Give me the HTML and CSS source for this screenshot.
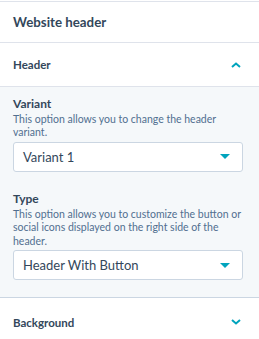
FILE: index.html
```html
<!DOCTYPE html>
<html>
<head>
<meta charset="utf-8">
<link rel="stylesheet" href="styles.css">
</head>
<body>
<div class="panel">
  <div class="title">Website header</div>
  <div class="section-head">
    <span>Header</span>
    <svg class="chev" width="10" height="6" viewBox="0 0 10 6"><path d="M1 5 L5 1.5 L9 5" fill="none" stroke="#00a4bd" stroke-width="2"/></svg>
  </div>
  <div class="section-body">
    <div class="field">
      <div class="label">Variant</div>
      <div class="desc">This option allows you to change the header variant.</div>
      <div class="select"><span>Variant 1</span><svg width="10" height="5" viewBox="0 0 10 5"><path d="M0 0 H10 L5 5 Z" fill="#00a4bd"/></svg></div>
    </div>
    <div class="field">
      <div class="label">Type</div>
      <div class="desc">This option allows you to customize the button or social icons displayed on the right side of the header.</div>
      <div class="select"><span>Header With Button</span><svg width="10" height="5" viewBox="0 0 10 5"><path d="M0 0 H10 L5 5 Z" fill="#00a4bd"/></svg></div>
    </div>
  </div>
  <div class="section-head last">
    <span>Background</span>
    <svg class="chev" width="10" height="6" viewBox="0 0 10 6"><path d="M1 1 L5 4.5 L9 1" fill="none" stroke="#00a4bd" stroke-width="2"/></svg>
  </div>
</div>
</body>
</html>
```
FILE: styles.css
```css
html, body { margin: 0; padding: 0; background: #fff; }
body { font-family: Lato, "Noto Sans", sans-serif; color: #33475b; }
.panel { border-top: 1px solid #dfe3eb; margin-top: 1px; }
.title { height: 40px; display: flex; align-items: center; padding: 0 13px; font-size: 13.3px; font-weight: 700; border-bottom: 1px solid #dfe3eb; }
.section-head { height: 43px; display: flex; align-items: center; justify-content: space-between; padding: 0 18px 0 13px; font-size: 11.5px; font-weight: 700; box-sizing: border-box; }
.section-head.last { padding-top: 1px; height: 47px; }
.section-body { background: #f5f8fa; border-top: 1px solid #dfe3eb; border-bottom: 1px solid #cbd6e2; padding: 9px 16px 17px 13px; display: flex; flex-direction: column; gap: 19px; }
.label { font-size: 12px; font-weight: 700; line-height: 16px; }
.desc { font-size: 10.5px; line-height: 13.4px; color: #516f90; margin-bottom: 2px; margin-top: 1px; margin-right: -4px; }
.select { height: 28px; background: #fff; border: 1px solid #cbd6e2; border-radius: 3px; display: flex; align-items: center; justify-content: space-between; padding: 0 12px 0 9px; font-size: 13px; }
```
